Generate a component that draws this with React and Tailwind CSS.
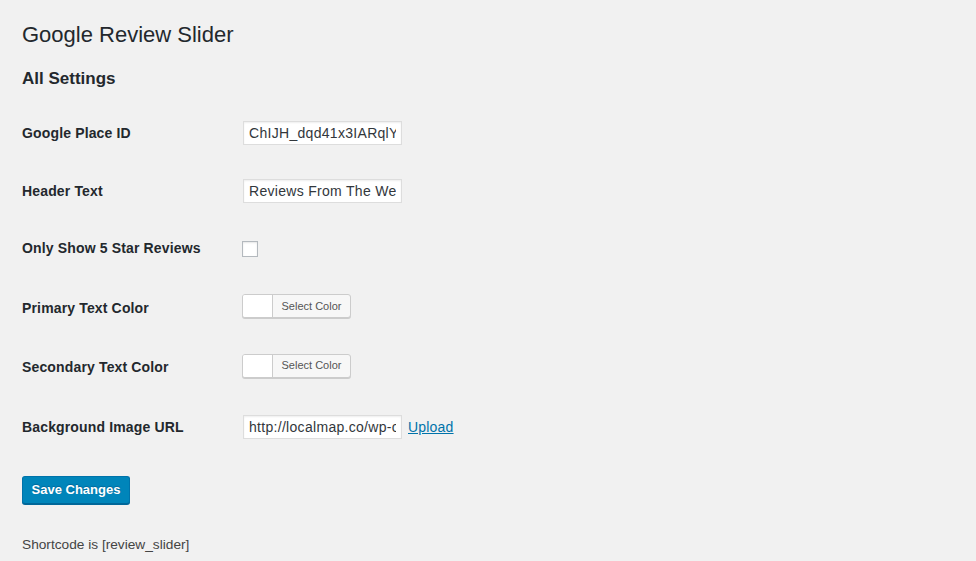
import React from "react";

const font = { fontFamily: '"Liberation Sans", Arial, sans-serif' };

function TextField({ value }) {
  return (
    <input
      type="text"
      readOnly
      value={value}
      className="w-[159px] h-[24px] border border-[#dddddd] bg-white px-[5px] text-[14px] tracking-[0.3px] text-[#32373c] shadow-[inset_0_1px_2px_rgba(0,0,0,0.07)] outline-none"
      style={font}
    />
  );
}

function ColorButton() {
  return (
    <button className="flex h-[24px] w-[109px] items-stretch overflow-hidden rounded-[3px] border border-[#cccccc] bg-[#f7f7f7] shadow-[0_1px_0_#cccccc]">
      <span className="w-[30px] border-r border-[#cccccc] bg-white" />
      <span className="flex flex-1 items-center justify-center text-[11px] text-[#555555]">
        Select Color
      </span>
    </button>
  );
}

function Row({ label, h, labelPad = "", children }) {
  return (
    <div className={`flex items-center ${h}`}>
      <div className={`w-[221px] text-[14px] font-bold tracking-[0.15px] text-[#23282d] ${labelPad}`}>
        {label}
      </div>
      <div className="flex items-center">{children}</div>
    </div>
  );
}

export default function App() {
  return (
    <div className="min-h-[561px] w-full bg-[#f1f1f1] px-[22px]" style={font}>
      <h1 className="pt-[20px] text-[22px] leading-[29px] text-[#23282d]">
        Google Review Slider
      </h1>
      <h2 className="mt-[19px] text-[17px] font-bold leading-[22px] text-[#23282d]">
        All Settings
      </h2>

      <div className="mt-[14px]">
        <Row label="Google Place ID" h="h-[58px]">
          <TextField value="ChIJH_dqd41x3IARqlYe4pPbHqM" />
        </Row>
        <Row label="Header Text" h="h-[58px]">
          <TextField value="Reviews From The Web" />
        </Row>
        <Row label="Only Show 5 Star Reviews" h="h-[57px]">
          <span className="-ml-[1px] block h-[16px] w-[16px] border border-[#b4b9be] bg-white shadow-[inset_0_1px_2px_rgba(0,0,0,0.1)]" />
        </Row>
        <Row label="Primary Text Color" h="h-[58px]" labelPad="pt-[4px]">
          <div className="-ml-[1px]">
            <ColorButton />
          </div>
        </Row>
        <Row label="Secondary Text Color" h="h-[61px]" labelPad="pt-[4px]">
          <div className="-ml-[1px]">
            <ColorButton />
          </div>
        </Row>
        <Row label="Background Image URL" h="h-[62px]">
          <TextField value="http://localmap.co/wp-content/uploads/bg.jpg" />
          <a href="#" className="ml-[6px] text-[14px] tracking-[0.2px] text-[#0073aa] underline">
            Upload
          </a>
        </Row>
      </div>

      <button className="mt-[18px] h-[28px] w-[108px] rounded-[3px] border border-[#0073aa] border-b-[#006799] bg-[#0085ba] text-[13px] font-bold text-white shadow-[0_1px_0_#006799] [text-shadow:0_-1px_1px_#006799]">
        Save Changes
      </button>

      <p className="mt-[32px] text-[13.7px] leading-[18px] text-[#444444]">
        Shortcode is [review_slider]
      </p>
    </div>
  );
}
